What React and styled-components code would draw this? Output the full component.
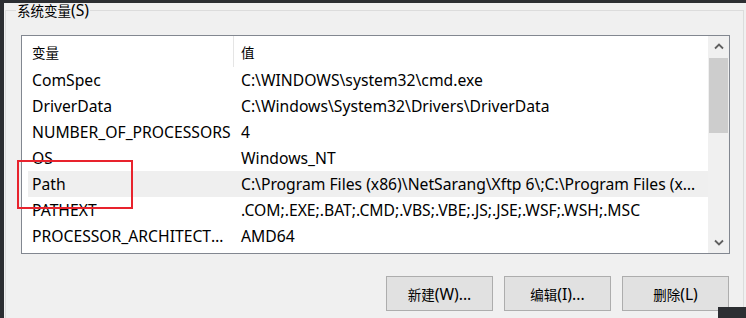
import React from 'react';
import styled, { createGlobalStyle } from 'styled-components';

const GlobalStyle = createGlobalStyle`
  html, body {
    margin: 0;
    padding: 0;
    background: #f0f0f0;
  }
  body {
    font-family: "Noto Sans", "Noto Sans CJK SC", sans-serif;
    font-size: 15.7px;
    color: #000;
  }
`;

const VARIABLES = [
  { name: 'ComSpec', value: 'C:\\WINDOWS\\system32\\cmd.exe' },
  { name: 'DriverData', value: 'C:\\Windows\\System32\\Drivers\\DriverData' },
  { name: 'NUMBER_OF_PROCESSORS', value: '4' },
  { name: 'OS', value: 'Windows_NT' },
  {
    name: 'Path',
    value: 'C:\\Program Files (x86)\\NetSarang\\Xftp 6\\;C:\\Program Files (x86)\\NetSarang\\Xshell 6\\',
    selected: true,
  },
  { name: 'PATHEXT', value: '.COM;.EXE;.BAT;.CMD;.VBS;.VBE;.JS;.JSE;.WSF;.WSH;.MSC' },
  { name: 'PROCESSOR_ARCHITECTURE', value: 'AMD64' },
];

const Frame = styled.div`
  position: relative;
  box-sizing: border-box;
  width: 746px;
  height: 318px;
  overflow: hidden;
  display: flex;
  flex-direction: column;
  background: #f0f0f0;
  border-top: 3px solid #2c2e32;
  border-left: 4px solid #2c2e32;
`;

const GroupBox = styled.section`
  position: relative;
  flex: 1;
  display: flex;
  flex-direction: column;
  margin: 7px 2px 0 1px;
  padding: 24px 13px 0 15px;
  border: 1px solid #dcdcdc;
  border-bottom: none;
`;

const Legend = styled.span`
  position: absolute;
  top: -11px;
  left: 10px;
  padding: 0 1px;
  background: #f0f0f0;
  line-height: 20px;
`;

/* CJK glyphs render smaller than the Latin UI font in the original */
const Han = styled.span`
  font-size: 13.5px;
`;

const ListView = styled.div`
  display: flex;
  height: 219px;
  box-sizing: border-box;
  border: 1px solid #828790;
  background: #fff;
`;

const Table = styled.div`
  flex: 1;
  min-width: 0;
  display: flex;
  flex-direction: column;
  overflow: hidden;
`;

const Row = styled.div`
  display: flex;
  align-items: center;
  height: ${p => (p.header ? '31px' : '26px')};
  flex-shrink: 0;
  margin-left: 6px;
  background: ${p => (p.selected ? '#efefef' : 'transparent')};
  white-space: nowrap;
`;

const NameCell = styled.div`
  box-sizing: border-box;
  width: 206px;
  flex-shrink: 0;
  align-self: stretch;
  display: flex;
  align-items: center;
  padding: 0 2px 0 4px;
  border-right: 1px solid ${p => (p.header ? '#e5e5e5' : 'transparent')};
  overflow: hidden;

  span {
    overflow: hidden;
    text-overflow: ellipsis;
  }
`;

const ValueCell = styled.div`
  flex: 1;
  min-width: 0;
  padding: 0 10px 0 7px;
  overflow: hidden;
  text-overflow: ellipsis;
`;

const ScrollBar = styled.div`
  width: 21px;
  flex-shrink: 0;
  display: flex;
  flex-direction: column;
  background: #f0f0f0;
`;

const ArrowButton = styled.div`
  height: 21px;
  display: flex;
  align-items: center;
  justify-content: center;
  flex-shrink: 0;
`;

const Track = styled.div`
  flex: 1;
  padding-top: 1px;
`;

const Thumb = styled.div`
  height: 75px;
  margin: 0 1px;
  background: #cdcdcd;
`;

const ButtonBar = styled.div`
  display: flex;
  justify-content: flex-end;
  gap: 11px;
  margin-top: 22px;
  padding-right: 1px;
`;

const Button = styled.button`
  box-sizing: border-box;
  width: 107px;
  height: 35px;
  font: inherit;
  color: #000;
  background: #e1e1e1;
  border: 1px solid #adadad;
  padding: 0;
`;

const Highlight = styled.div`
  position: absolute;
  left: 13px;
  top: 157px;
  width: 116px;
  height: 49px;
  box-sizing: border-box;
  border: 2px solid #e8232d;
`;

const Corner = styled.div`
  position: absolute;
  right: 0;
  bottom: 0;
  width: 28px;
  height: 11px;
  background: #2c2e32;
`;

const Chevron = ({ up }) => (
  <svg width="10" height="7" viewBox="0 0 10 7">
    <path
      d={up ? 'M1 5.5 L5 1.5 L9 5.5' : 'M1 1.5 L5 5.5 L9 1.5'}
      fill="none"
      stroke="#606060"
      strokeWidth="1.8"
    />
  </svg>
);

export default function App() {
  return (
    <>
      <GlobalStyle />
      <Frame>
        <GroupBox>
          <Legend><Han>系统变量</Han>(S)</Legend>
          <ListView>
            <Table>
              <Row header>
                <NameCell header><Han>变量</Han></NameCell>
                <ValueCell><Han>值</Han></ValueCell>
              </Row>
              {VARIABLES.map(v => (
                <Row key={v.name} selected={v.selected}>
                  <NameCell><span>{v.name}</span></NameCell>
                  <ValueCell>{v.value}</ValueCell>
                </Row>
              ))}
            </Table>
            <ScrollBar>
              <ArrowButton><Chevron up /></ArrowButton>
              <Track><Thumb /></Track>
              <ArrowButton><Chevron /></ArrowButton>
            </ScrollBar>
          </ListView>
          <ButtonBar>
            <Button><Han>新建</Han>(W)...</Button>
            <Button><Han>编辑</Han>(I)...</Button>
            <Button><Han>删除</Han>(L)</Button>
          </ButtonBar>
        </GroupBox>
        <Highlight />
        <Corner />
      </Frame>
    </>
  );
}
